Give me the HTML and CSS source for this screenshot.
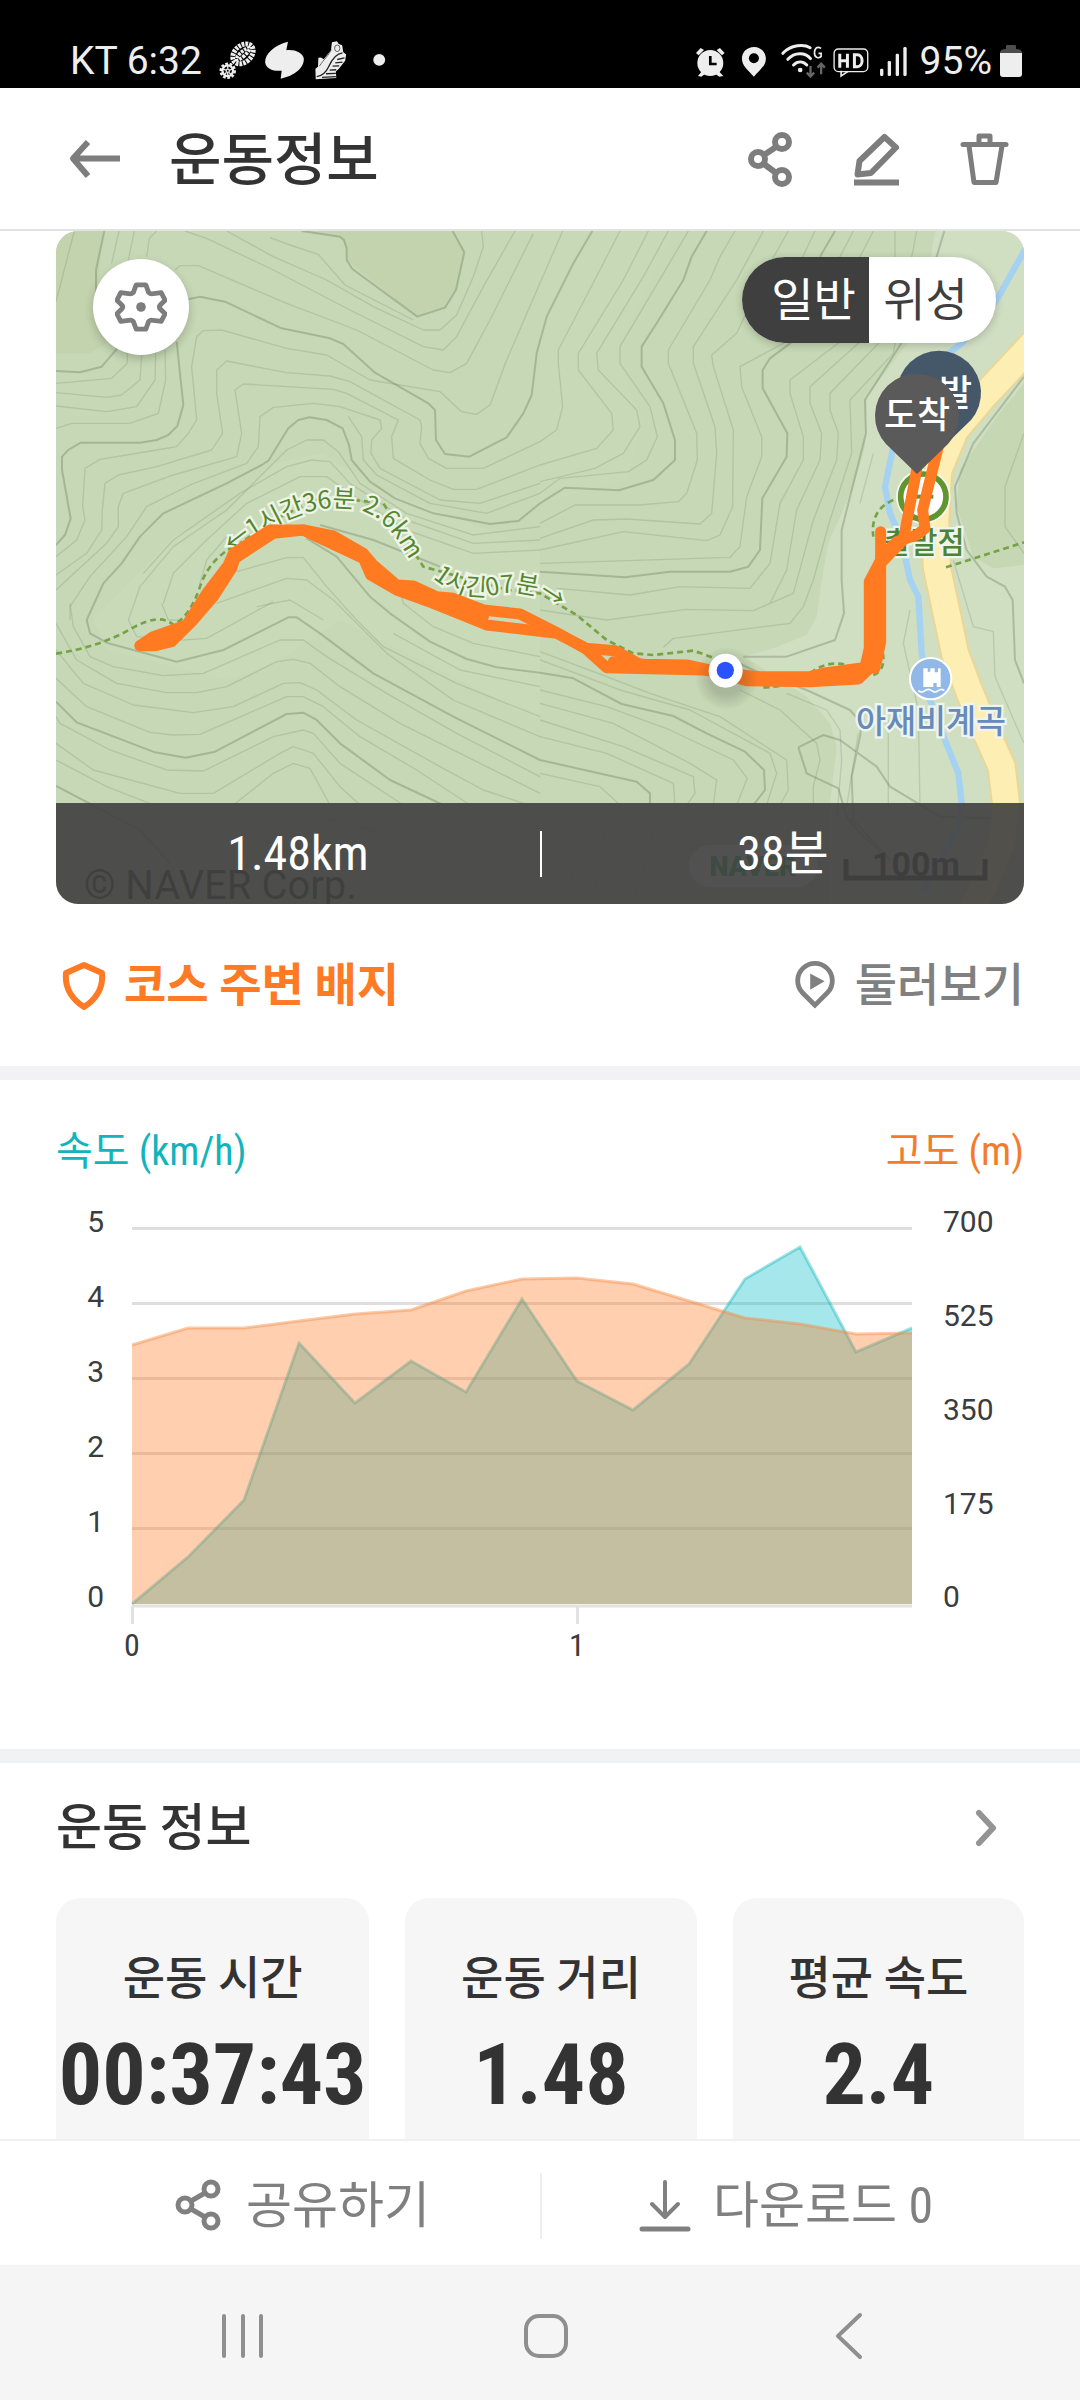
FILE: index.html
```html
<!DOCTYPE html>
<html lang="ko">
<head>
<meta charset="utf-8">
<meta name="viewport" content="width=device-width, initial-scale=1">
<title>운동정보</title>
<link rel="stylesheet" href="styles.css">
</head>
<body>
<div class="app">
  <div class="status">
    <div class="status-side">
      <span>KT 6:32</span>
      <svg class="status-left" viewBox="15 30 520 130" aria-hidden="true">
        <g fill="none" stroke="#eee">
          <ellipse cx="95" cy="75" rx="25" ry="35" transform="rotate(48 95 75)" stroke-width="15" stroke-dasharray="8 3"/>
          <ellipse cx="95" cy="75" rx="7" ry="26" transform="rotate(48 95 75)" stroke-width="11" stroke-dasharray="8 3"/>
          <circle cx="49" cy="126" r="21" stroke-width="8" stroke-dasharray="8 5"/>
          <circle cx="49" cy="126" r="16" stroke-width="7"/>
          <circle cx="49" cy="126" r="5" stroke-width="4"/>
          <path d="M49 110v10M49 132v10M34 120l9 4M64 120l-9 4M38 138l7-7M60 138l-7-7" stroke-width="4"/>
        </g>
        <path d="M231 38C190 48 161 75 162 100c2 20 24 28 50 26l-3 24c42-8 71-33 70-60-2-18-26-29-53-26z" fill="#eee"/>
        <path d="M364 40l15-3 6 8 10 4 3 20 9 8-3 19-19 24-9 8 1 20-62 4-1-32 8-6 1-27 8-1 8 5 22-27z" fill="#eee"/>
        <g fill="none" stroke="#222" stroke-width="4">
          <path d="M396 72c-20 2-34 24-42 42-8 17-20 28-36 30M380 92l22-5M374 102l22-2M366 112l20-1M357 124l20-1M346 135l30-1M334 146l42-2"/>
          <path d="M362 62c-8 18-20 27-36 50" stroke-width="2"/>
          <ellipse cx="380" cy="58" rx="8" ry="10" stroke-width="2"/>
        </g>
        <circle cx="507" cy="93" r="18" fill="#eee"/>
      </svg>
    </div>
    <div class="status-side">
      <svg class="status-right" viewBox="45 30 640 120" aria-hidden="true">
        <g fill="#eee">
          <circle cx="91" cy="96" r="39"/>
          <path d="M48 66l14-15 10 6-16 16zM134 66l-14-15-10 6 16 16zM66 120l10 8-12 9-10-2zM116 120l-10 8 12 9 12-2z"/>
          <path d="M222 48c-20 0-36 15-36 35 0 22 20 35 36 54 16-19 36-32 36-54 0-20-16-35-36-35z"/>
          <circle cx="361" cy="117" r="7"/>
          <rect x="601" y="113" width="10" height="22" rx="4"/><rect x="624" y="90" width="10" height="45" rx="4"/><rect x="648" y="68" width="10" height="67" rx="4"/><rect x="671" y="48" width="10" height="87" rx="4"/>
        </g>
        <circle cx="222" cy="82" r="15" fill="#000"/>
        <path d="M91 75v24h19" fill="none" stroke="#000" stroke-width="8"/>
        <g fill="none" stroke="#eee" stroke-width="9" stroke-linecap="round">
          <path d="M309 67c24-27 64-28 82-17M324 85c20-22 52-22 68-2M341 102c12-12 28-12 40 0"/>
          <path d="M424 52c-14-8-20 2-20 14 0 16 14 17 20 10V67h-8" stroke-width="5" stroke-linecap="butt"/>
          <rect x="463" y="54" width="101" height="68" rx="13" stroke-width="4"/>
          <path d="M484 121v14l20-13" stroke-width="5"/>
          <path d="M480 68v42M503 68v42M480 89h23M524 71v36h8c20 0 20-36 0-36z" stroke-width="9" stroke-linecap="butt"/>
        </g>
        <path d="M392 105v30M381 125l11 12 11-12M424 130V99M413 110l11-12 11 12" fill="none" stroke="#666" stroke-width="7"/>
      </svg>
      <span>95%</span>
      <svg class="battery" viewBox="0 0 22 32" aria-hidden="true"><path d="M0 8q0-4 6-4V1q0-1 1-1h8q1 0 1 1v3q6 0 6 4z" fill="#4d4d4d"/><path d="M0 8h22v21q0 3-3 3H3q-3 0-3-3z" fill="#eee"/></svg>
    </div>
  </div>

  <header class="header">
    <button class="icon-btn" aria-label="뒤로"><svg viewBox="65 129 60 60"><path d="M120 158.500H73M88 142L73 158.500 88 176" fill="none" stroke="#7d7d7d" stroke-width="6" stroke-linejoin="round"/></svg></button>
    <h1>운동정보</h1>
    <div class="header-actions">
      <button class="icon-btn" aria-label="공유"><svg viewBox="740 129 60 60"><g fill="none" stroke="#7d7d7d" stroke-width="6"><circle cx="782" cy="142" r="7"/><circle cx="758" cy="159" r="7"/><circle cx="782" cy="177" r="7"/><path d="M776 147l-12 8M764 164l12 9"/></g></svg></button>
      <button class="icon-btn" aria-label="편집"><svg viewBox="848 129 60 60"><g fill="none" stroke="#7d7d7d" stroke-width="6"><path d="M885.500 137L897 147.500 872 173 858.500 174.500 860.500 161z" stroke-linejoin="round"/><path d="M855 182.500h45"/></g></svg></button>
      <button class="icon-btn" aria-label="삭제"><svg viewBox="954 129 60 60"><g fill="none" stroke="#7d7d7d" stroke-width="5" stroke-linejoin="round"><path d="M963 144.500h43" stroke-linecap="round"/><path d="M979 143v-7h11v7"/><path d="M969 146l5 36.500h22l6-36.500"/></g></svg></button>
    </div>
  </header>

  <main class="content">
    <section class="course">
      <div class="map">
        <svg class="map-canvas" viewBox="56 231 968 673" role="img" aria-label="운동 경로 지도">
          <defs>
            <path id="trail-a" d="M578 1000C690 905 820 860 905 862C1015 866 1070 930 1160 1120"/>
            <path id="trail-b" d="M1178 1074C1240 1125 1300 1132 1360 1126C1430 1110 1480 1118 1525 1148L1640 1230"/>
          </defs>
          <rect x="56" y="231" width="968" height="673" fill="#c6d8b5"/>
          <!-- map tiles: every path unit is a third of a map pixel -->
          <g transform="translate(40 220) scale(.33333)">
            <g fill="#c2d3ad">
              <path d="M785 33L900 50 920 85 920 120 1132 290 1215 263 1248 210 1273 97 1238 33z"/>
              <path d="M48 33H190L168 230 250 340 150 400 48 400z"/>
            </g>
            <path fill="#c9dab9" d="M560 880L700 730 850 700 1000 800 1500 990V1500L900 1200 700 1330 560 1380 200 1290 160 1200 400 950z"/>
            <path fill="#c9dab9" d="M1500 33H1900L1720 400 1810 600 1760 780 1500 850z" opacity=".6"/>
            <g fill="#d0dec2">
              <path d="M2685 33L2670 130 2610 360 2480 530 2475 680 2440 800 2365 970 2345 1080 2330 1190 2300 1245 2200 1285 2110 1310 2160 1340 2300 1430 2370 1510 2390 1580 2370 1750 2370 2060H2960V33z"/>
            </g>
            <path fill="#c6d7b4" d="M2952 490L2870 590 2760 750 2750 860 2800 1010 2860 1045 2952 1035z"/>
            <g fill="none" stroke="#71806a" stroke-opacity=".23" stroke-width="4" stroke-linejoin="round">
              <path d="M103 33L48 245M237 33L215 130M283 33L265 120M350 33L328 55 320 110"/>
              <path d="M435 33L500 55 700 150 930 270 1150 380 1210 390 1250 350 1330 200 1425 33"/>
              <path d="M560 33L700 110 860 180 1000 260 1150 330 1200 330 1250 285 1300 170 1330 80 1325 33"/>
              <path d="M690 53L750 75 835 103 915 195 1120 300"/>
              <path d="M48 490L215 475 262 430V400M48 518L200 532 245 525 300 480 305 405M48 558L200 575 290 560 345 480 347 400M48 625L95 610 270 610 355 580 377 480 375 390"/>
              <path d="M405 150L420 137 475 137 740 250 950 330 1180 450 1230 458 1280 430 1350 300 1480 40"/>
              <path d="M48 1010L110 960 135 900 128 860 135 745 180 718 350 690 410 680 445 640 470 600 455 440 470 350 490 332 545 330 740 385 860 405 990 480 1200 515 1265 575 1310 583 1350 555 1400 420 1568 33"/>
              <path d="M48 1065L140 1000 185 930 187 870 195 790 235 765 350 740 515 690 548 640 530 520 530 450 560 423 740 458 870 468 930 485 1140 600 1145 620 1140 670 1165 715 1220 745 1330 745 1500 665"/>
              <path d="M48 1110L200 970 235 920 235 860 250 820 400 765 590 710 605 640 585 510 610 492 880 508 920 520 1075 600 1055 650 1060 715 1170 780 1240 808 1310 808 1500 735"/>
              <path d="M90 1200V1160L150 1070 260 950 320 860 450 795 620 730 655 680 660 590 700 562 820 550 900 560 1020 600 1025 625 995 660 993 700 1020 745 1200 840 1320 850 1500 790"/>
              <path d="M925 590L965 650 970 720 1010 765 1170 850 1340 880 1500 820"/>
              <path d="M265 1200L300 1100 400 980 560 870 740 690 800 660 850 660 895 695 960 790 1100 880 1300 945 1500 920"/>
              <path d="M310 1060L400 960 600 820 740 740 815 720 870 725 930 790 1100 900 1300 970 1500 960"/>
              <path d="M370 1150L400 1060 500 960 620 850 780 770 860 770 930 820 1100 930 1300 1000 1500 990"/>
              <path d="M480 1090L500 1020 560 950M590 1055L740 1013 790 1013 860 1100 950 1200 1030 1280 1250 1390 1500 1490M530 1150L740 1075 800 1080 880 1140 1040 1300 1240 1440 1500 1550M650 1160L750 1140 850 1200"/>
              <path d="M90 1150L100 1220 150 1310 220 1340 370 1367 490 1360 720 1260 790 1260 860 1310 1040 1420 1250 1540 1500 1670"/>
              <path d="M48 1210L110 1320 230 1390 380 1418 470 1418 560 1400 710 1325 760 1318 810 1330 900 1400 1080 1510 1500 1720"/>
              <path d="M48 1290L130 1390 280 1455 460 1478 580 1460 730 1390 780 1388 830 1410 950 1500 1200 1640 1330 1710 1480 1760"/>
              <path d="M48 1375L140 1460 330 1537 400 1545 480 1543 740 1430 790 1430 850 1460 960 1550 1130 1650 1290 1755"/>
              <path d="M48 1490L60 1510 210 1590 380 1650 490 1653 700 1550 790 1530 820 1540 900 1630 1090 1755M48 1570L160 1650 420 1720 520 1720 720 1600 760 1580 820 1600 900 1700 960 1755M48 1620L200 1700 340 1755M580 1755L700 1660 760 1630 810 1645 870 1755"/>
              <path d="M265 1200L290 1250 430 1260 500 1255 700 1145M365 1150L385 1200 420 1200M1080 1110L1090 1150 1180 1220 1300 1270 1500 1310M1060 1240L1260 1350 1500 1400"/>
              <path d="M1740 33L1690 130 1555 390 1555 430 1568 560 1550 630 1500 665M1825 33L1750 180 1615 400 1615 450 1715 580 1720 630 1670 685 1500 735M1885 33L1810 170 1670 400 1675 450 1790 570 1800 620 1750 700 1665 745 1500 785M1945 33L1900 110 1740 380 1740 430 1830 560 1852 650 1820 720 1765 755 1560 775 1500 820"/>
              <path d="M2085 33L2040 110 2010 180 1885 390 1885 430 1970 640 1972 720 1940 820 1915 845 1800 855 1605 855 1500 910M2170 33L2090 180 1960 380 1960 430 2025 620 2030 700 2015 880 1980 912 1760 897 1660 900 1500 955M2245 33L2190 130 2090 340 2015 405 2020 440 2080 630 2078 860 2040 945 2000 962 1750 935 1500 990"/>
              <path d="M2325 33L2260 170 2230 370 2100 440 2105 500 2165 650 2165 710 2120 830 2100 980 2070 1012 1500 1030M2440 33L2400 110V365L2250 480 2250 520 2290 650 2290 720 2220 850 2190 1030 2130 1105 1920 1100 1770 1125 1550 1105"/>
              <path d="M2500 33L2460 110V365L2310 500 2310 550 2345 640 2340 720 2270 870 2240 1050 2190 1150 2140 1172 1940 1168 1700 1200 1500 1170M2565 33V110L2520 365 2370 520 2370 570 2395 640 2390 720 2320 900 2260 1120 2140 1172M2630 33L2560 400 2430 540 2435 700 2370 900 2320 1080 2290 1160 2250 1210 1900 1255 1870 1282"/>
              <path d="M2952 640L2895 800V920L2952 1000M2500 700L2460 850M2740 1020L2800 1220 2860 1235 2865 1370 2952 1570M2610 1170L2590 1270 2635 1470 2640 1760M2545 1500V1760"/>
              <path d="M1500 1295L1700 1370 1830 1420 2040 1490 2240 1620 2245 1710 2220 1755M1500 1320L1740 1410 1950 1470 2190 1600 2210 1660 2180 1755M1500 1410L1700 1460 1890 1530 2080 1620 2122 1675 2090 1755M1500 1450L1720 1510 1950 1630 2030 1680 2020 1755M1500 1500L1750 1580 1960 1670 1965 1720 1940 1755M1500 1550L1700 1600 1900 1690 1905 1755M1500 1660L1680 1700 1740 1755"/>
              <path d="M2100 1410L2220 1470 2330 1570 2340 1620 2320 1700V1800M2240 1420L2360 1470 2400 1530 2405 1620 2390 1800M2455 1540L2420 1760"/>
              <path d="M48 1850L220 2030M560 2000L700 1850 880 1800 1100 1860 1170 1950 1000 2040M1340 1760V2050M1500 1800L1620 1850 1580 2050M1700 1800L1660 2050M1850 1800L1780 2050"/>
            </g>
            <g fill="none" stroke="#66755c" stroke-opacity=".34" stroke-width="6" stroke-linejoin="round">
              <path d="M193 33L168 150 168 230 250 340 232 385 185 440 120 457 48 453"/>
              <path d="M785 33L900 50 912 60 920 85 920 120 937 147 1132 290 1215 263 1248 210 1273 97 1238 33"/>
              <path d="M445 238L480 230 555 245 725 325 870 355 910 372 1005 458 1165 550 1185 570 1188 660 1215 702 1288 710 1400 652 1450 580 1475 525 1490 400 1520 290 1600 130 1657 33"/>
              <path d="M410 365L430 555 412 618 385 645 350 660 300 668 122 668 85 690 66 710 66 750 92 895 75 945 48 975"/>
              <path d="M140 1200L190 1090 245 1030 300 950 370 880 560 790 665 735 685 722 745 625 775 600 808 592 860 600 908 625 927 675 935 720 990 785 1065 835 1180 880 1350 912 1435 903 1500 850 1575 803 1737 811 1840 780 1905 720 1905 660 1870 550 1805 440 1805 380 1850 310 1930 180 1955 110 2000 33"/>
              <path d="M140 1200L150 1240 205 1270 410 1325 550 1290 745 1192 770 1192 840 1240 1000 1360 1240 1490 1500 1620 1790 1685 1830 1720 1830 1755"/>
              <path d="M48 1445L110 1507 345 1597 437 1613 525 1595 740 1482 790 1478 830 1500 900 1570 1050 1680 1210 1755M48 1698L300 1830 390 1930"/>
              <path d="M840 915L1000 960 1200 1040M800 955L890 1010 990 1130 1050 1180 1170 1265 1280 1317 1370 1342 1500 1358 1600 1375 1745 1452 1900 1488 2000 1540 2115 1595 2172 1650 2175 1710 2140 1755"/>
              <path d="M2385 33L2340 110M2257 365L2190 415 2168 450 2168 505 2242 640 2240 710 2167 835 2160 990 2125 1040 2070 1055 1890 1055 1755 1072 1500 1055"/>
              <path d="M2713 33L2690 110 2587 365 2475 540 2478 640 2405 930 2405 1080 2412 1180 2385 1260 2240 1310 2110 1310"/>
              <path d="M2952 470L2800 670 2745 800 2750 880 2780 990 2840 1070 2895 1100 2918 1140 2925 1320 2952 1390"/>
              <path d="M2075 1320L2140 1350 2300 1410 2430 1470 2465 1510 2460 1550 2435 1670 2440 1800 2550 1920M2275 1582L2350 1545 2400 1560 2510 1640 2550 1700 2700 1790 2850 1795M2275 1582L2300 1660 2395 1705 2420 1790 2460 1840 2540 1910"/>
            </g>
            <path d="M2960 80L2870 240 2770 365 2690 430 2600 560 2560 680 2535 800 2550 880 2585 960 2610 1080 2635 1130 2645 1300 2670 1440 2715 1560 2755 1660 2765 1750 2760 1810 2720 1890 2650 2010" fill="none" stroke="#a6d2f2" stroke-width="19"/>
            <path d="M2980 370L2830 530 2745 630 2695 750 2686 900 2690 1040 2720 1180 2745 1300 2790 1420 2840 1540 2885 1640 2898 1750 2885 1870 2840 1980 2790 2080" fill="none" stroke="#ead798" stroke-width="90"/>
            <path d="M2980 370L2830 530 2745 630 2695 750 2686 900 2690 1040 2720 1180 2745 1300 2790 1420 2840 1540 2885 1640 2898 1750 2885 1870 2840 1980 2790 2080" fill="none" stroke="#fdeeb3" stroke-width="78"/>
            <g fill="none" stroke="#76a347" stroke-width="8" stroke-dasharray="18 12">
              <path d="M48 1301Q180 1280 270 1228T400 1215Q450 1190 480 1100T600 970L700 900 850 830 1030 850 1150 1040 1400 1110 1500 1120 1610 1185 1700 1260 1780 1300 1840 1305 1960 1292 2040 1320"/>
              <path d="M2170 1402Q2260 1400 2310 1360T2420 1335M2500 1365Q2540 1350 2527 1290M2560 840Q2490 870 2500 950M2718 1042L2952 967"/>
            </g>
            <g class="map-trail">
              <text><textPath href="#trail-a">←1시간36분 2.6km</textPath></text>
              <text><textPath href="#trail-b">1시간07분→</textPath></text>
            </g>
            <circle cx="2650" cy="830" r="82" fill="#f4f7ee"/>
            <circle cx="2650" cy="830" r="68" fill="#fff" stroke="#62952f" stroke-width="17"/>
            <path d="M2610 830h70" stroke="#62952f" stroke-width="12"/>
            <text class="map-poi map-poi-green" x="2652" y="1000">출발점</text>
            <g fill="none" stroke="#ff7a20" stroke-width="33" stroke-linejoin="round" stroke-linecap="round">
              <path d="M300 1277L340 1250 440 1215 500 1120 565 1035 580 1000 690 930 790 930 880 948 970 1000 1000 1035 1070 1095 1120 1098 1190 1130 1240 1135 1330 1170 1440 1182 1545 1235 1635 1285 1725 1292 1800 1333 1940 1335 2020 1352 2120 1382 2310 1385 2455 1377 2510 1325 2522 1265V1030L2590 960 2630 750"/>
              <path d="M300 1277H345L395 1265 460 1200 520 1130 575 1045 585 1015 700 940 790 930 970 1015 992 1065 1070 1110 1180 1150 1340 1215 1550 1240 1630 1280 1700 1343 1990 1350 2150 1370 2310 1370 2360 1358 2475 1342 2488 1285V1085L2522 1020V935"/>
              <path d="M2522 1010L2570 965 2630 945 2655 925 2648 870 2665 800 2700 660"/>
              <path d="M2505 1345V1060M2380 1370L2500 1340M320 1268L395 1245 440 1215M800 935L960 1010M1130 1115L1330 1190M1720 1325L1900 1340"/>
            </g>
            <circle cx="2672" cy="1376" r="62" fill="#92b8e7" stroke="#fff" stroke-width="6"/>
            <path d="M2650 1345h13v10h8v-10h13v12h10v-12h8v56h-12v-12h-10v12h-30z" fill="#fff"/>
            <path d="M2635 1412q10 8 20 0t20 0 20 0 18 0" fill="none" stroke="#fff" stroke-width="5"/>
            <text class="map-poi map-poi-blue" x="2673" y="1540">아재비계곡</text>
            <radialGradient id="shade"><stop offset=".5" stop-color="#333" stop-opacity=".2"/><stop offset="1" stop-color="#333" stop-opacity="0"/></radialGradient>
            <circle cx="2060" cy="1375" r="95" fill="url(#shade)"/>
            <circle cx="2057" cy="1352" r="51" fill="#fff"/>
            <circle cx="2056" cy="1351" r="26" fill="#2b52ff"/>
          </g>
          <path d="M939 451L907 420A42 42 0 1 1 971 420z" fill="#45586a"/>
          <text class="pin-label" x="939" y="406">출발</text>
          <path d="M917 474L886 444A42 42 0 1 1 948 444z" fill="#5a5a5a"/>
          <text class="pin-label" x="917" y="428">도착</text>
          <text class="map-copy" x="84" y="899">© NAVER Corp.</text>
          <rect x="689" y="845" width="129" height="42" rx="21" fill="#fff"/>
          <text class="map-brand" x="753" y="876">NAVER</text>
          <path d="M846 859v19h139v-19" fill="none" stroke="#111" stroke-width="5"/>
          <text class="map-scale" x="916" y="876">100m</text>
        </svg>
        <button class="map-settings" aria-label="지도 설정"><svg viewBox="0 0 54 54"><path d="M22 4h10l3 8q2 2 5 1l8-1 4 8-5 5q-2 2 0 4l5 5-4 8-8-1q-3-1-5 1l-3 8H22l-3-8q-2-2-5-1l-8 1-4-8 5-5q2-2 0-4l-5-5 4-8 8 1q3 1 5-1z" fill="none" stroke="#7d7d7d" stroke-width="5" stroke-linejoin="round"/><circle cx="27" cy="27" r="5" fill="#7d7d7d"/></svg></button>
        <div class="map-type">
          <button class="map-type-btn is-active" aria-pressed="true">일반</button>
          <button class="map-type-btn" aria-pressed="false">위성</button>
        </div>
        <div class="map-stats"><span>1.48km</span><span>38분</span></div>
      </div>
      <div class="course-links">
        <a class="link link-badge" href="#badges"><svg viewBox="0 0 44 50"><path d="M22 5L40 13q2 21-18 34Q2 34 4 13z" fill="none" stroke="#ff7a24" stroke-width="6" stroke-linejoin="round"/></svg>코스 주변 배지</a>
        <a class="link link-tour" href="#tour"><svg viewBox="0 0 44 52"><path d="M22 47L9 34A18 18 0 1 1 35 34z" fill="none" stroke="#808080" stroke-width="5"/><path d="M17 14l15 8-15 9z" fill="#808080"/></svg>둘러보기</a>
      </div>
    </section>

    <section class="chart">
      <div class="chart-legend"><span class="legend-speed">속도 (km/h)</span><span class="legend-altitude">고도 (m)</span></div>
      <svg class="chart-plot" viewBox="56 1182 968 482" role="img" aria-label="속도와 고도 그래프">
        <path d="M132 1228.500H912M132 1303.500H912M132 1378.500H912M132 1453.500H912M132 1528.500H912" stroke="#dedede" stroke-width="3"/>
        <path d="M132 1606H912M132.500 1606V1624M577.500 1606V1624" stroke="#e2e2e2" stroke-width="3"/>
        <path d="M132 1604L188 1557 244 1500 299 1343 355 1403 411 1361 466 1392 522 1299 577 1381 633 1410 689 1364 745 1279 800 1247 856 1352 912 1328V1604z" fill="#12c0c8" fill-opacity=".38"/>
        <path d="M132 1604L188 1557 244 1500 299 1343 355 1403 411 1361 466 1392 522 1299 577 1381 633 1410 689 1364 745 1279 800 1247 856 1352 912 1328" fill="none" stroke="#12b4bc" stroke-opacity=".4" stroke-width="3"/>
        <path d="M132 1345L188 1328 244 1328 299 1321 355 1314 411 1310 466 1291 522 1279 577 1278 633 1284 689 1301 745 1318 800 1324 856 1334 912 1333V1604H132z" fill="#ff7a22" fill-opacity=".36"/>
        <path d="M132 1345L188 1328 244 1328 299 1321 355 1314 411 1310 466 1291 522 1279 577 1278 633 1284 689 1301 745 1318 800 1324 856 1334 912 1333" fill="none" stroke="#f58b45" stroke-opacity=".45" stroke-width="3"/>
        <g class="axis axis-left"><text x="104" y="1232">5</text><text x="104" y="1307">4</text><text x="104" y="1382">3</text><text x="104" y="1457">2</text><text x="104" y="1532">1</text><text x="104" y="1607">0</text></g>
        <g class="axis"><text x="943" y="1232">700</text><text x="943" y="1326">525</text><text x="943" y="1420">350</text><text x="943" y="1514">175</text><text x="943" y="1607">0</text></g>
        <g class="axis axis-bottom"><text x="132" y="1656">0</text><text x="577" y="1656">1</text></g>
      </svg>
    </section>

    <section class="summary">
      <div class="summary-head"><h2>운동 정보</h2><button class="more" aria-label="더보기"><svg viewBox="0 0 26 40"><path d="M5 5l14 15L5 35" fill="none" stroke="#949494" stroke-width="6" stroke-linejoin="round" stroke-linecap="round"/></svg></button></div>
      <dl class="cards">
        <div class="card"><dt>운동 시간</dt><dd>00:37:43</dd></div>
        <div class="card"><dt>운동 거리</dt><dd>1.48</dd></div>
        <div class="card"><dt>평균 속도</dt><dd>2.4</dd></div>
      </dl>
    </section>
  </main>

  <div class="toolbar">
    <button class="tool tool-share"><svg viewBox="172 2176 52 58"><g fill="none" stroke="#808080" stroke-width="5"><circle cx="210" cy="2188" r="7"/><circle cx="184" cy="2204" r="7"/><circle cx="210" cy="2220" r="7"/><path d="M204 2192l-14 8M190 2208l14 8"/></g></svg>공유하기</button>
    <button class="tool tool-download"><svg viewBox="638 2176 54 58"><g fill="none" stroke="#808080" stroke-width="4" stroke-linecap="round" stroke-linejoin="round"><path d="M665 2181v34M652 2203l13 13 13-13"/><path d="M642 2228h46" stroke-width="5"/></g></svg>다운로드 0</button>
  </div>

  <nav class="sysnav">
    <button aria-label="최근 앱"><svg viewBox="0 0 50 50"><path d="M6 5v40M25 5v40M43 5v40" stroke="#8f8f8f" stroke-width="4" stroke-linecap="round"/></svg></button>
    <button aria-label="홈"><svg viewBox="0 0 50 50"><rect x="5" y="5" width="40" height="40" rx="13" fill="none" stroke="#8f8f8f" stroke-width="4"/></svg></button>
    <button aria-label="이전"><svg viewBox="0 0 50 50"><path d="M36 4L14 25l22 21" fill="none" stroke="#8f8f8f" stroke-width="4" stroke-linecap="round" stroke-linejoin="round"/></svg></button>
  </nav>
</div>
</body>
</html>
```
FILE: styles.css
```css
* { box-sizing: border-box; margin: 0; padding: 0; }

body {
  background: #fff;
  color: #333;
  font-family: "Roboto Condensed", "Noto Sans CJK KR", sans-serif;
}

button {
  border: 0;
  background: none;
  color: inherit;
  font: inherit;
  cursor: pointer;
}

a { color: inherit; text-decoration: none; }
svg { display: block; }

.app {
  display: flex;
  flex-direction: column;
  height: 100vh;
}

/* System status bar */
.status {
  display: flex;
  flex: none;
  justify-content: space-between;
  height: 88px;
  padding: 33px 58px 0 70px;
  background: #000;
  color: #eee;
  font: 39px/56px Roboto, sans-serif;
}
.status-side { display: flex; align-items: center; }
.status-left { width: 173px; height: 43px; margin-left: 14px; }
.status-right { width: 213px; height: 40px; margin-right: 12px; }
.battery { width: 22px; height: 32px; margin-left: 8px; }

/* Title bar */
.header {
  display: flex;
  flex: none;
  align-items: center;
  height: 143px;
  padding: 0 66px 0 65px;
  border-bottom: 2px solid #e2e2e2;
}
.header h1 {
  flex: 1;
  margin-left: 44px;
  padding-top: 4px;
  font-size: 57px;
  font-weight: 500;
  line-height: 84px;
}
.header-actions { display: flex; gap: 47px; }
.icon-btn, .icon-btn svg { width: 60px; height: 60px; }

.content {
  flex: 1;
  min-height: 0;
  overflow-y: auto;
  scrollbar-width: none;
}

/* Course map */
.course { padding: 0 56px; border-bottom: 14px solid #f2f2f4; }
.map {
  position: relative;
  overflow: hidden;
  border-radius: 22px;
}
.map-canvas { width: 100%; height: auto; }
.map-trail {
  fill: #55862f;
  stroke: #eef4e6;
  stroke-width: 14px;
  paint-order: stroke;
  font: 74px "Noto Sans CJK KR", sans-serif;
}
.map-poi {
  stroke: #eef4ee;
  stroke-width: 14px;
  paint-order: stroke;
  text-anchor: middle;
  font: 500 88px "Noto Sans CJK KR", sans-serif;
}
.map-poi-green { fill: #4b8436; }
.map-poi-blue { fill: #668bbb; font-size: 98px; }
.pin-label {
  fill: #fff;
  text-anchor: middle;
  font: 500 36px "Noto Sans CJK KR", sans-serif;
}
.map-copy { fill: #222; font: 40px Roboto, sans-serif; }
.map-brand { fill: #03b350; text-anchor: middle; font: 900 27px Roboto, sans-serif; }
.map-scale { fill: #111; text-anchor: middle; font: 700 34px Roboto, sans-serif; }

.map-settings {
  position: absolute;
  top: 28px;
  left: 37px;
  display: grid;
  place-items: center;
  width: 96px;
  height: 96px;
  border-radius: 50%;
  background: #fff;
  box-shadow: 0 4px 10px rgba(0, 0, 0, .2);
}
.map-settings svg { width: 52px; height: 52px; }

.map-type {
  position: absolute;
  top: 26px;
  right: 28px;
  display: flex;
  overflow: hidden;
  border-radius: 43px;
  background: #fff;
  box-shadow: 0 2px 8px rgba(0, 0, 0, .2);
}
.map-type-btn {
  width: 127px;
  height: 86px;
  padding-right: 14px;
  color: #3f3f3f;
  font-size: 46px;
  line-height: 86px;
}
.map-type-btn.is-active {
  padding: 0 0 0 16px;
  background: #3f3f3f;
  color: #fff;
}

.map-stats {
  position: absolute;
  right: 0;
  bottom: 0;
  left: 0;
  display: grid;
  grid-template-columns: 1fr 1fr;
  align-items: center;
  height: 101px;
  background: rgba(66, 66, 66, .92);
  color: #fff;
  font-size: 48px;
  line-height: 46px;
  text-align: center;
}
.map-stats span + span { border-left: 2px solid #fff; }

.course-links {
  display: flex;
  align-items: center;
  justify-content: space-between;
  height: 162px;
}
.link { display: flex; align-items: center; gap: 18px; font-size: 46px; line-height: 70px; }
.link svg { width: 44px; height: 50px; }
.link-badge { margin-left: 6px; color: #ff7a24; font-weight: 700; }
.link-tour { color: #808080; font-weight: 500; }

/* Speed and altitude chart */
.chart { padding: 42px 56px 85px; border-bottom: 14px solid #f0f2f4; }
.chart-legend {
  display: flex;
  justify-content: space-between;
  font-size: 40px;
  line-height: 60px;
}
.legend-speed { color: #12b4bc; }
.legend-altitude { color: #f47b2c; }
.chart-plot { width: 100%; height: auto; }
.axis { fill: #3a3c40; font: 30px Roboto, sans-serif; }
.axis-left { text-anchor: end; }
.axis-bottom { text-anchor: middle; font: 32px "Roboto Condensed", sans-serif; }

/* Workout summary */
.summary { padding: 30px 56px 0; }
.summary-head { display: flex; align-items: center; justify-content: space-between; }
.summary-head h2 { font-size: 50px; font-weight: 500; line-height: 70px; }
.more { padding-right: 24px; }
.more svg { width: 26px; height: 40px; }
.cards {
  display: grid;
  grid-template-columns: 312fr 290fr 290fr;
  gap: 36px;
  margin-top: 35px;
}
.card {
  height: 300px;
  padding-top: 44px;
  border-radius: 24px;
  background: #f6f6f6;
  text-align: center;
}
.card dt { font-size: 46px; font-weight: 500; line-height: 72px; }
.card dd { margin-top: 16px; font-size: 86px; font-weight: 700; line-height: 90px; }

/* Bottom actions */
.toolbar {
  display: grid;
  flex: none;
  grid-template-columns: 542fr 538fr;
  align-items: center;
  height: 126px;
  padding-top: 6px;
  border-top: 2px solid #f0f0f0;
  color: #808080;
}
.tool { display: flex; align-items: center; gap: 21px; height: 66px; font-size: 50px; line-height: 66px; }
.tool-share { justify-content: flex-end; padding-right: 110px; border-right: 2px solid #eee; }
.tool-download { padding-left: 96px; }
.tool svg { height: 58px; }

/* System navigation */
.sysnav {
  display: grid;
  flex: none;
  grid-template-columns: 1fr 1fr 1fr;
  height: 135px;
  padding: 6px 80px 0 91px;
  background: #f5f5f5;
}
.sysnav button { display: grid; place-items: center; }
.sysnav svg { width: 50px; height: 50px; }
```
